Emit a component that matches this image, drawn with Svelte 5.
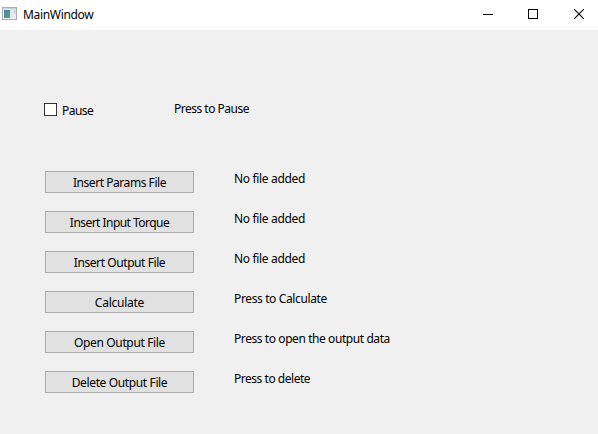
<script>
  const rows = [
    { action: 'Insert Params File', status: 'No file added', a: -0.45, s: -0.33 },
    { action: 'Insert Input Torque', status: 'No file added', a: -0.54, s: -0.33 },
    { action: 'Insert Output File', status: 'No file added', a: -0.42, s: -0.33 },
    { action: 'Calculate', status: 'Press to Calculate', a: -0.25, s: -0.37 },
    { action: 'Open Output File', status: 'Press to open the output data', a: -0.35, s: -0.42 },
    { action: 'Delete Output File', status: 'Press to delete', a: -0.37, s: -0.47 }
  ];
</script>

<div class="window">
  <header>
    <svg class="app" width="16" height="14" viewBox="0 0 16 14">
      <defs>
        <linearGradient id="pane" x1="0" y1="0" x2="0.7" y2="1">
          <stop offset="0" stop-color="#4a7fb0" />
          <stop offset="1" stop-color="#4fa57c" />
        </linearGradient>
      </defs>
      <rect x=".5" y=".5" width="14" height="12" fill="#f6f7f8" stroke="#a9adb1" />
      <rect x="1" y="1" width="13" height="1.5" fill="#ccd3da" />
      <rect x="2" y="3" width="6" height="8" fill="url(#pane)" />
      <rect x="8" y="3" width="3" height="8" fill="#e4e7e9" />
      <rect x="11.7" y="3" width="1.8" height="4" fill="#b9d3cb" />
      <rect x="11.7" y="7" width="1.8" height="4" fill="#e3e9e8" />
    </svg>
    <span class="title">MainWindow</span>
    <div class="controls">
      <svg width="10" height="10" viewBox="0 0 10 10" shape-rendering="crispEdges"><path d="M0 5.5H10" stroke="#000" /></svg>
      <svg class="max" width="10" height="10" viewBox="0 0 10 10" shape-rendering="crispEdges"><rect x=".5" y=".5" width="9" height="9" fill="none" stroke="#000" /></svg>
      <svg width="10" height="10" viewBox="0 0 10 10"><path d="M0 0L10 10M10 0L0 10" stroke="#000" stroke-width="1.1" /></svg>
    </div>
  </header>
  <main>
    <div class="pause">
      <label><span class="box"></span><span class="name">Pause</span></label>
      <span class="hint">Press to Pause</span>
    </div>
    <div class="rows">
      {#each rows as row}
        <div class="row">
          <button style:letter-spacing="{row.a}px">{row.action}</button>
          <span class="status" style:letter-spacing="{row.s}px">{row.status}</span>
        </div>
      {/each}
    </div>
  </main>
</div>

<style>
  :global(body) { margin: 0; }
  .window {
    width: 598px; height: 434px; background: #f0f0f0; color: #000; overflow: hidden;
    font: 12px/17px "Noto Sans", "Open Sans", sans-serif; letter-spacing: -0.33px; white-space: nowrap;
  }
  header { height: 30px; background: #fff; display: flex; align-items: flex-start; box-sizing: border-box; padding: 0 14px 0 2px; }
  .app { margin-top: 7px; }
  .title { margin: 6px 0 0 5px; }
  .controls { margin: 9px 0 0 auto; display: flex; gap: 35px; }
  .max { margin-right: 1px; }
  .pause { height: 26px; padding: 70px 0 0 44px; display: flex; align-items: flex-start; }
  label { display: flex; align-items: flex-start; width: 130px; }
  .box { width: 11px; height: 11px; border: 1px solid #333; background: #fff; margin: 3px 5px 0 0; }
  .name { margin-top: 2px; letter-spacing: -0.55px; }
  .hint { letter-spacing: -0.5px; }
  .rows { padding: 45px 0 0 45px; display: flex; flex-direction: column; gap: 18px; }
  .row { display: flex; align-items: flex-start; gap: 40px; height: 22px; }
  .status { margin-top: -1px; }
  button {
    width: 149px; height: 22px; box-sizing: border-box; border: 1px solid #adadad; background: #e1e1e1;
    color: #000; font: inherit; padding: 1px 0 0;
  }
</style>
